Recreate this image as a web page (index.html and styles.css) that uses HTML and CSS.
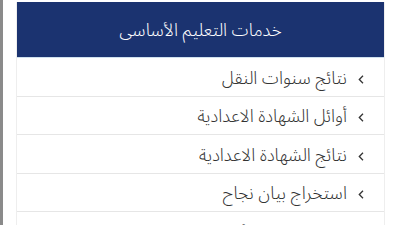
FILE: index.html
```html
<!DOCTYPE html>
<html lang="ar">
<head>
<meta charset="utf-8">
<link rel="stylesheet" href="styles.css">
</head>
<body>
<div class="frame">
  <div class="edge"></div>
  <div class="panel" dir="rtl">
    <div class="head">خدمات التعليم الأساسى</div>
    <ul class="list">
      <li class="item"><svg class="chev" width="6" height="9" viewBox="0 0 6 9"><path d="M5 0.8 L1.3 4.5 L5 8.2" fill="none" stroke="#333" stroke-width="1.3"/></svg><span class="label">نتائج سنوات النقل</span></li>
      <li class="item"><svg class="chev" width="6" height="9" viewBox="0 0 6 9"><path d="M5 0.8 L1.3 4.5 L5 8.2" fill="none" stroke="#333" stroke-width="1.3"/></svg><span class="label">أوائل الشهادة الاعدادية</span></li>
      <li class="item"><svg class="chev" width="6" height="9" viewBox="0 0 6 9"><path d="M5 0.8 L1.3 4.5 L5 8.2" fill="none" stroke="#333" stroke-width="1.3"/></svg><span class="label">نتائج الشهادة الاعدادية</span></li>
      <li class="item"><svg class="chev" width="6" height="9" viewBox="0 0 6 9"><path d="M5 0.8 L1.3 4.5 L5 8.2" fill="none" stroke="#333" stroke-width="1.3"/></svg><span class="label">استخراج بيان نجاح</span></li>
      <li class="item"><svg class="chev" width="6" height="9" viewBox="0 0 6 9"><path d="M5 0.8 L1.3 4.5 L5 8.2" fill="none" stroke="#333" stroke-width="1.3"/></svg><span class="label">نتائج مسابقة الأوائل</span></li>
    </ul>
  </div>
</div>
</body>
</html>
```
FILE: styles.css
```css
html, body { margin: 0; padding: 0; background: #fff; }
body { width: 400px; height: 225px; overflow: hidden; font-family: "Noto Sans Arabic", "Noto Kufi Arabic", "DejaVu Sans", sans-serif; }
.frame { display: flex; height: 225px; }
.edge { width: 3px; background: #8a8a8a; flex: none; }
.panel { width: 369px; flex: none; margin-left: 13px; margin-top: 2px; border-left: 1px solid #eee; border-right: 1px solid #eee; box-sizing: border-box; }
.head { height: 56px; background: #1b3370; color: #fff; display: flex; align-items: center; justify-content: center; font-size: 17.5px; font-weight: 300; border-bottom: 1px solid #cfe0ee; padding-top: 2px; box-sizing: border-box; }
.list { list-style: none; margin: 0; padding: 0; }
.item { height: 38.5px; border-bottom: 1px solid #e6e6e6; display: flex; align-items: center; padding-right: 20px; gap: 11px; color: #333; font-size: 17.5px; font-weight: 300; box-sizing: border-box; }
.chev { flex: none; margin-top: 5px; }
.label { padding-top: 3px; }
```
